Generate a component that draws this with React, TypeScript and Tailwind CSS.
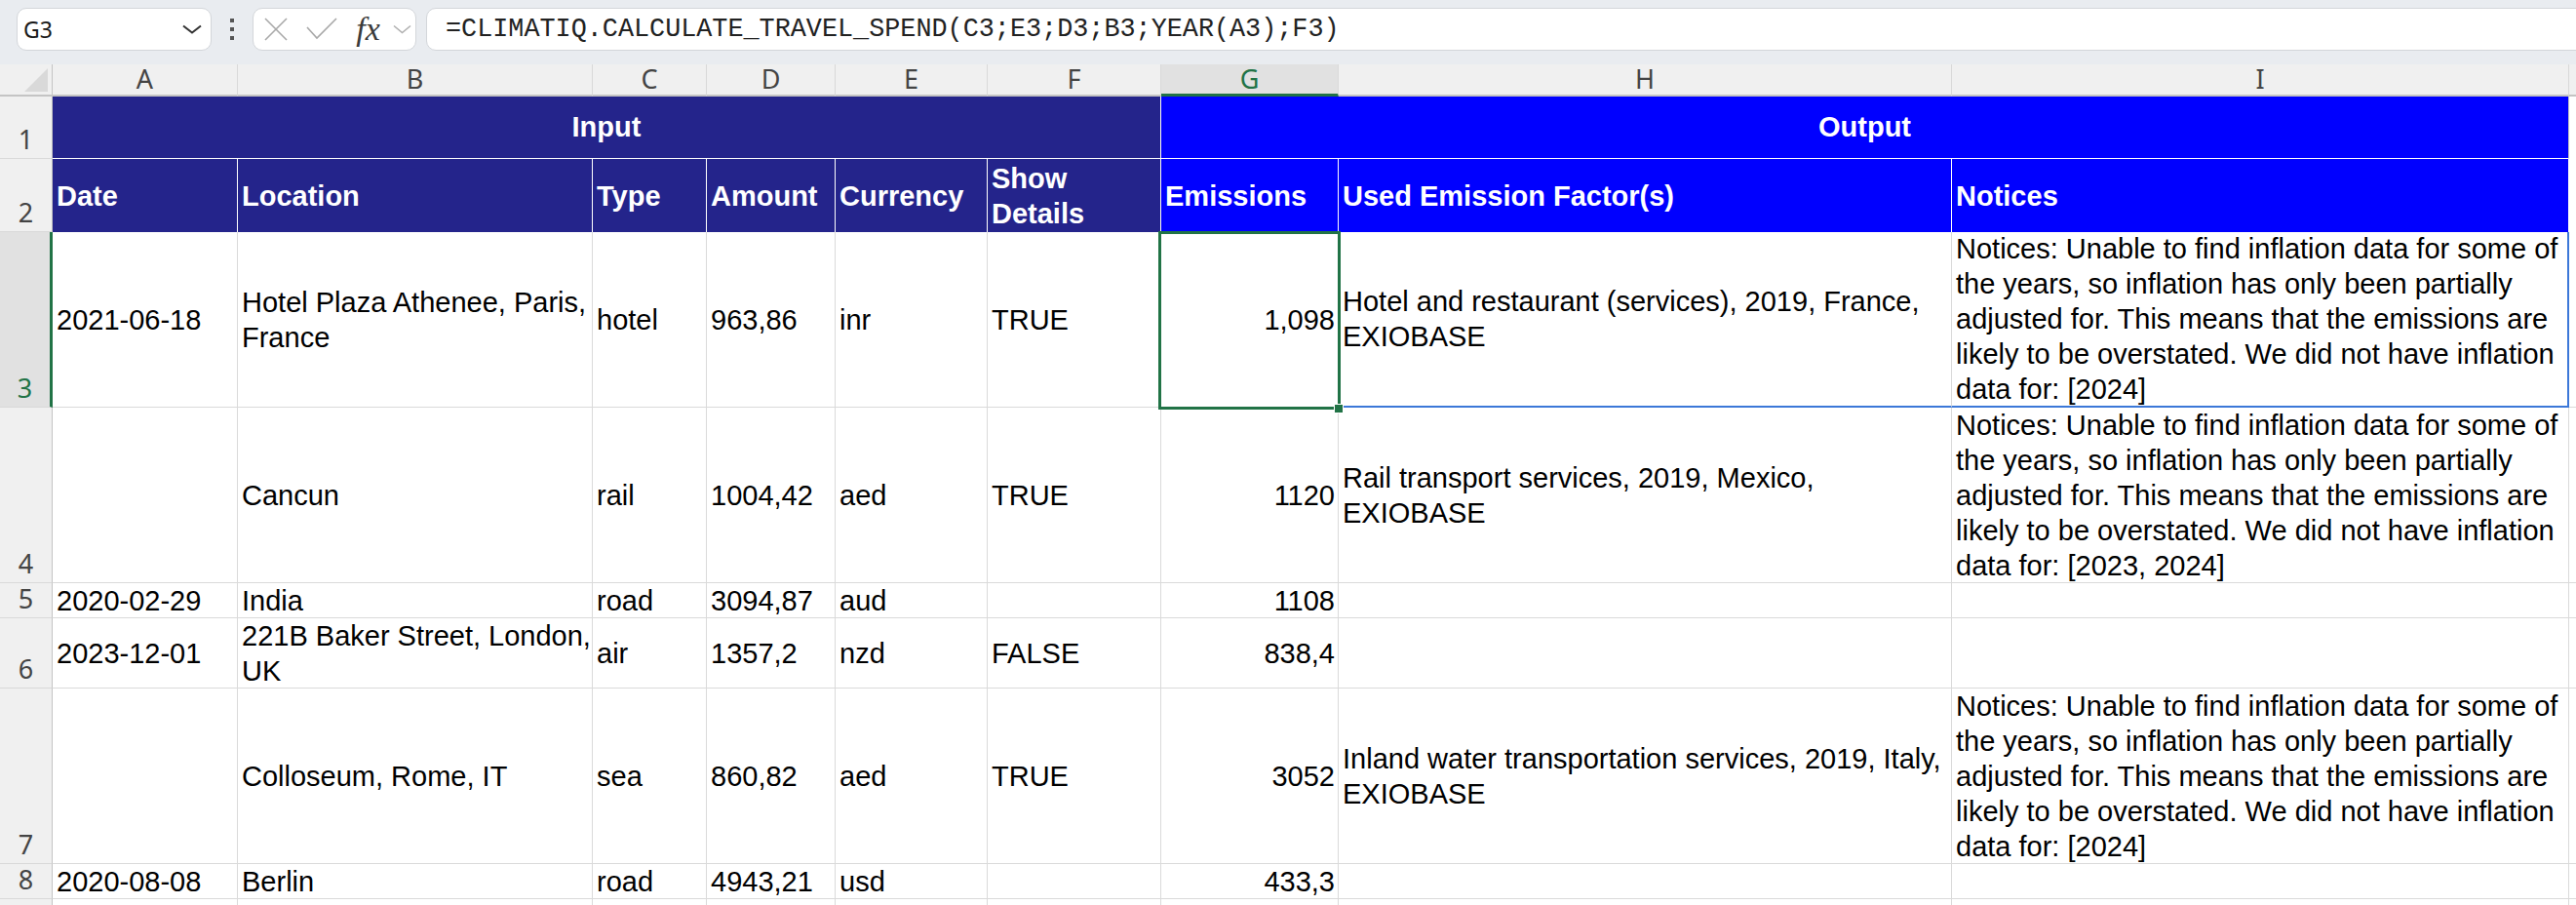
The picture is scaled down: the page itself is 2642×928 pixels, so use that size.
import React from "react";

const COLS = ["A", "B", "C", "D", "E", "F", "G", "H", "I"];

type V = string | string[];

const notice = (years: string): string[] => [
  "Notices: Unable to find inflation data for some of",
  "the years, so inflation has only been partially",
  "adjusted for. This means that the emissions are",
  "likely to be overstated. We did not have inflation",
  `data for: [${years}]`,
];

const ROWS: { n: number; cells: V[] }[] = [
  {
    n: 3,
    cells: [
      "2021-06-18",
      ["Hotel Plaza Athenee, Paris,", "France"],
      "hotel",
      "963,86",
      "inr",
      "TRUE",
      "1,098",
      ["Hotel and restaurant (services), 2019, France,", "EXIOBASE"],
      notice("2024"),
    ],
  },
  {
    n: 4,
    cells: [
      "",
      "Cancun",
      "rail",
      "1004,42",
      "aed",
      "TRUE",
      "1120",
      ["Rail transport services, 2019, Mexico,", "EXIOBASE"],
      notice("2023, 2024"),
    ],
  },
  { n: 5, cells: ["2020-02-29", "India", "road", "3094,87", "aud", "", "1108", "", ""] },
  {
    n: 6,
    cells: ["2023-12-01", ["221B Baker Street, London,", "UK"], "air", "1357,2", "nzd", "FALSE", "838,4", "", ""],
  },
  {
    n: 7,
    cells: [
      "",
      "Colloseum, Rome, IT",
      "sea",
      "860,82",
      "aed",
      "TRUE",
      "3052",
      ["Inland water transportation services, 2019, Italy,", "EXIOBASE"],
      notice("2024"),
    ],
  },
  { n: 8, cells: ["2020-08-08", "Berlin", "road", "4943,21", "usd", "", "433,3", "", ""] },
  { n: 9, cells: ["", "", "", "", "", "", "", "", ""] },
];

function RowHead({ n, sel, hide }: { n: number; sel?: boolean; hide?: boolean }) {
  return (
    <div
      className={
        "flex items-end justify-center pb-[3px] border-b border-b-[#d9d9d9] font-['Noto_Sans',sans-serif] text-[27px] leading-[32px] " +
        (sel
          ? "bg-[#e1e1e1] text-[#217346] border-r-[3px] border-r-[#217346]"
          : "bg-[#f0f0f0] text-[#444] border-r border-r-[#c4c4c4]")
      }
    >
      {hide ? "" : n}
    </div>
  );
}

function Cell({
  v,
  right,
  border,
  sel,
}: {
  v: V;
  right?: boolean;
  border?: string;
  sel?: boolean;
}) {
  const lines = Array.isArray(v) ? v : v ? [v] : [];
  return (
    <div
      className={
        "flex items-center whitespace-nowrap text-[29px] leading-[36px] text-black bg-white " +
        (sel ? "relative " : "overflow-hidden ") +
        (right ? "justify-end pl-[4px] pr-[3px] " : "pl-[4px] pr-[4px] ") +
        (border ?? "border-r border-b border-r-[#dadada] border-b-[#dadada]")
      }
    >
      <div>
        {lines.map((l, i) => (
          <div key={i}>{l}</div>
        ))}
      </div>
      {sel && (
        <>
          <div className="absolute z-10 left-[-3px] top-[-1px] right-[-3px] bottom-[-3px] border-[3px] border-[#217346] pointer-events-none" />
          <div className="absolute z-20 right-[-6px] bottom-[-7px] w-[10px] h-[10px] bg-[#217346] border border-white" />
        </>
      )}
    </div>
  );
}

function TopBar() {
  return (
    <div className="h-[66px] bg-[#e9ecf0] flex items-start pt-[8px] pl-[17px] overflow-hidden">
      <div className="w-[200px] h-[44px] shrink-0 bg-white border border-[#d3d6da] rounded-[10px] flex items-center justify-between pl-[6px] pr-[9px]">
        <span className="font-['Noto_Sans',sans-serif] text-[23px] text-[#1a1a1a]">G3</span>
        <svg width="20" height="10" viewBox="0 0 20 10">
          <polyline points="1,1.5 10,8.5 19,1.5" fill="none" stroke="#333" strokeWidth="2" />
        </svg>
      </div>
      <div className="w-[42px] h-[44px] shrink-0 flex flex-col items-center justify-center gap-[5px]">
        <div className="w-[4px] h-[4px] bg-[#555]" />
        <div className="w-[4px] h-[4px] bg-[#555]" />
        <div className="w-[4px] h-[4px] bg-[#555]" />
      </div>
      <div className="w-[168px] h-[44px] shrink-0 bg-white border border-[#d3d6da] rounded-[10px] flex items-center pl-[11px]">
        <svg width="24" height="24" viewBox="0 0 24 24" className="shrink-0">
          <line x1="1" y1="1" x2="23" y2="23" stroke="#a8a8a8" strokeWidth="1.6" />
          <line x1="23" y1="1" x2="1" y2="23" stroke="#a8a8a8" strokeWidth="1.6" />
        </svg>
        <svg width="32" height="24" viewBox="0 0 32 24" className="shrink-0 ml-[19px]">
          <polyline points="1,10 11,21 31,1" fill="none" stroke="#a8a8a8" strokeWidth="1.6" />
        </svg>
        <span className="shrink-0 w-[27px] ml-[18px] font-['Liberation_Serif',serif] italic text-[34px] leading-[32px] text-[#3a3a3a] text-center">
          fx
        </span>
        <svg width="19" height="10" viewBox="0 0 19 10" className="shrink-0 ml-[12px]">
          <polyline points="1,1.5 9.5,8.5 18,1.5" fill="none" stroke="#b0b0b0" strokeWidth="1.6" />
        </svg>
      </div>
      <div className="ml-[10px] flex-1 h-[44px] mr-[-20px] bg-white border border-[#d3d6da] rounded-[10px] flex items-center pl-[19px]">
        <span className="font-['Liberation_Mono',monospace] text-[26.8px] text-[#222]">
          =CLIMATIQ.CALCULATE_TRAVEL_SPEND(C3;E3;D3;B3;YEAR(A3);F3)
        </span>
      </div>
    </div>
  );
}

function Sheet() {
  const hdrNavy = "bg-[#24248b]";
  const hdrBlue = "bg-[#0000ff]";
  const hdrBase =
    "flex items-center pl-[4px] text-white font-bold text-[29px] leading-[36px] whitespace-nowrap border-r border-r-white overflow-hidden ";
  return (
    <div className="grid grid-cols-[54px_190px_364px_117px_132px_156px_178px_182px_629px_633px_7px] grid-rows-[33px_64px_75px_180px_180px_36px_72px_180px_36px_36px]">
      {/* column headers */}
      <div className="relative bg-[#f0f0f0] border-r border-r-[#c4c4c4] border-b-2 border-b-[#c4c4c4]">
        <svg width="54" height="31" viewBox="0 0 54 31" className="absolute left-0 top-0">
          <polygon points="49,4 49,28 25,28" fill="#d9d9d9" />
        </svg>
      </div>
      {COLS.map((c) => (
        <div
          key={c}
          className={
            "flex items-center justify-center font-['Noto_Sans',sans-serif] text-[27px] border-r border-r-[#d9d9d9] " +
            (c === "G"
              ? "bg-[#e1e1e1] text-[#217346] border-b-[3px] border-b-[#217346]"
              : "bg-[#f0f0f0] text-[#444] border-b-2 border-b-[#c4c4c4]")
          }
        >
          {c}
        </div>
      ))}
      <div className="bg-[#f0f0f0] border-b-2 border-b-[#c4c4c4]" />

      {/* row 1 */}
      <RowHead n={1} />
      <div
        className={
          "col-span-6 flex items-center justify-center text-white font-bold text-[29px] border-r border-r-white border-b border-b-white " +
          hdrNavy
        }
      >
        Input
      </div>
      <div
        className={
          "col-span-3 flex items-center justify-center text-white font-bold text-[29px] border-r border-r-[#c4c4c4] border-b border-b-white " +
          hdrBlue
        }
      >
        Output
      </div>
      <div className="bg-white" />

      {/* row 2 */}
      <RowHead n={2} />
      <div className={hdrBase + hdrNavy}>Date</div>
      <div className={hdrBase + hdrNavy}>Location</div>
      <div className={hdrBase + hdrNavy}>Type</div>
      <div className={hdrBase + hdrNavy}>Amount</div>
      <div className={hdrBase + hdrNavy}>Currency</div>
      <div className={hdrBase + hdrNavy}>
        <div>
          <div>Show</div>
          <div>Details</div>
        </div>
      </div>
      <div className={hdrBase + hdrBlue}>Emissions</div>
      <div className={hdrBase + hdrBlue}>Used Emission Factor(s)</div>
      <div className={hdrBase + hdrBlue}>Notices</div>
      <div className="bg-white" />

      {/* data rows */}
      {ROWS.map((r) => (
        <React.Fragment key={r.n}>
          <RowHead n={r.n} sel={r.n === 3} hide={r.n === 9} />
          {r.cells.map((v, i) => {
            let border: string | undefined;
            if (r.n === 3 && i === 7)
              border = "border-r border-b-2 border-r-[#dadada] border-b-[#3c78d8]";
            if (r.n === 3 && i === 8)
              border = "border-r-2 border-b-2 border-r-[#3c78d8] border-b-[#3c78d8]";
            return (
              <Cell
                key={i}
                v={v}
                right={i === 6}
                border={border}
                sel={r.n === 3 && i === 6}
              />
            );
          })}
          <div className="bg-white border-b border-b-[#dadada]" />
        </React.Fragment>
      ))}
    </div>
  );
}

export default function App() {
  return (
    <div className="w-[2642px] h-[928px] overflow-hidden bg-white font-['Liberation_Sans',Arial,sans-serif]">
      <TopBar />
      <Sheet />
    </div>
  );
}
